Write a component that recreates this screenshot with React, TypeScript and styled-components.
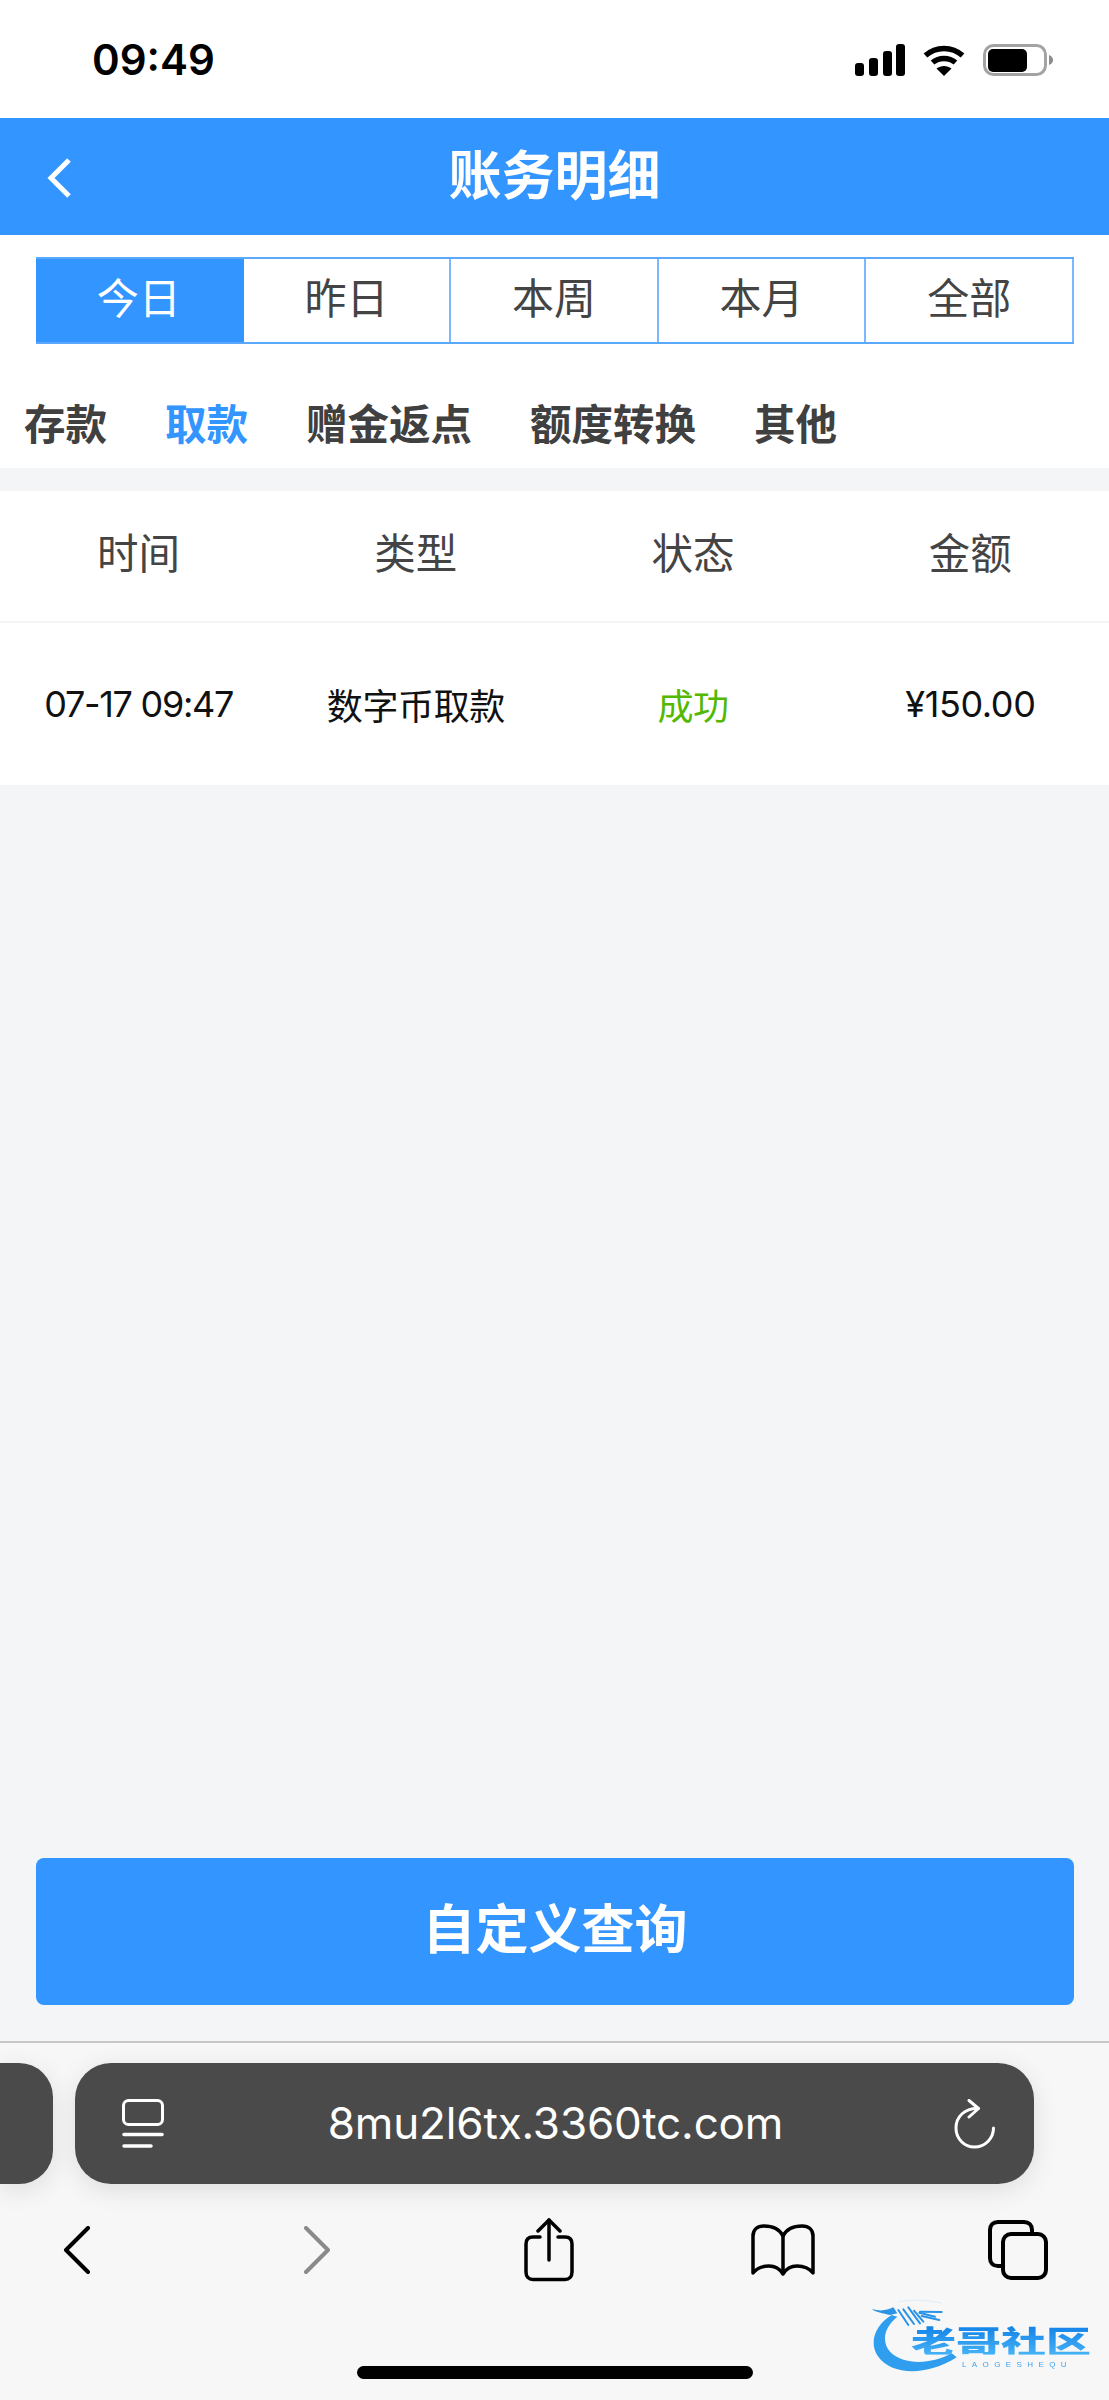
import * as React from 'react';
import styled, { createGlobalStyle } from 'styled-components';

const cjk = `"Noto Sans CJK SC", "Noto Sans", sans-serif`;

const GlobalStyle = createGlobalStyle`
  html, body {
    margin: 0;
    padding: 0;
    background: #f4f5f7;
  }
  * {
    box-sizing: border-box;
  }
`;

const Page = styled.div`
  position: relative;
  width: 1109px;
  height: 2400px;
  display: flex;
  flex-direction: column;
  overflow: hidden;
  background: #f4f5f7;
  font-family: ${cjk};
`;

const StatusBar = styled.div`
  height: 118px;
  flex: none;
  background: #ffffff;
  display: flex;
  align-items: flex-start;
  justify-content: space-between;
  padding: 34px 56px 0 92px;
`;

const Clock = styled.span`
  font-family: Inter, sans-serif;
  font-weight: 600;
  font-size: 42px;
  line-height: 52px;
  color: #000000;
`;

const StatusIcons = styled.div`
  display: flex;
  align-items: center;
  gap: 18px;
  margin-top: 10px;
`;

const Header = styled.header`
  height: 117px;
  flex: none;
  background: #3395ff;
  display: grid;
  grid-template-columns: 100px 1fr 100px;
  align-items: center;
`;

const BackButton = styled.div`
  display: flex;
  padding: 3px 0 0 46px;
`;

const Title = styled.h1`
  margin: 0;
  padding-bottom: 9px;
  text-align: center;
  font-size: 53px;
  line-height: 72px;
  font-weight: 700;
  color: #ffffff;
`;

const Main = styled.div`
  flex: 1;
  display: flex;
  flex-direction: column;
`;

const TopArea = styled.div`
  background: #ffffff;
  padding-top: 22px;
  height: 233px;
  flex: none;
`;

const RangeTabs = styled.div`
  margin: 0 35px 0 36px;
  height: 87px;
  display: grid;
  grid-template-columns: repeat(5, 1fr);
  border-top: 2px solid #5ba9ff;
  border-bottom: 2px solid #5ba9ff;
`;

const RangeTab = styled.div<{ $active?: boolean }>`
  display: flex;
  align-items: center;
  justify-content: center;
  padding-bottom: 10px;
  font-size: 42px;
  color: ${(p) => (p.$active ? '#ffffff' : '#444444')};
  background: ${(p) => (p.$active ? '#3395ff' : '#ffffff')};
  border-right: 2px solid ${(p) => (p.$active ? '#3395ff' : '#7ab9ff')};
`;

const KindTabs = styled.div`
  display: flex;
  gap: 58px;
  padding: 49px 0 0 24px;
`;

const KindTab = styled.span<{ $active?: boolean }>`
  font-size: 41.5px;
  line-height: 58px;
  font-weight: 700;
  color: ${(p) => (p.$active ? '#3395ff' : '#404040')};
`;

const Table = styled.div`
  margin-top: 23px;
  background: #ffffff;
  flex: none;
`;

const TableRow = styled.div<{ $head?: boolean }>`
  display: grid;
  grid-template-columns: repeat(4, 1fr);
  align-items: center;
  height: ${(p) => (p.$head ? '132px' : '162px')};
  border-bottom: ${(p) => (p.$head ? '2px solid #f4f5f7' : 'none')};
`;

const HeadCell = styled.div`
  padding-bottom: 10px;
  text-align: center;
  font-size: 41.5px;
  color: #444444;
`;

const Cell = styled.div<{ $success?: boolean; $tight?: boolean }>`
  text-align: center;
  font-size: 36px;
  font-family: Inter, ${cjk};
  letter-spacing: ${(p) => (p.$tight ? '-1.3px' : '-0.4px')};
  color: ${(p) => (p.$success ? '#52b900' : '#111111')};
`;

const Spacer = styled.div`
  flex: 1;
`;

const QueryButton = styled.div`
  margin: 0 35px 36px 36px;
  height: 147px;
  padding-bottom: 12px;
  border-radius: 8px;
  background: #3395ff;
  color: #ffffff;
  display: flex;
  align-items: center;
  justify-content: center;
  font-size: 53px;
  font-weight: 700;
`;

const BrowserChrome = styled.div`
  height: 359px;
  flex: none;
  background: #f7f7f7;
  border-top: 2px solid #c6c6c6;
`;

const AddressRow = styled.div`
  display: flex;
  gap: 22px;
  height: 121px;
  margin-top: 20px;
`;

const TabStub = styled.div`
  width: 53px;
  flex: none;
  background: #4a4a4a;
  border-radius: 0 34px 34px 0;
  box-shadow: 0 6px 26px rgba(0, 0, 0, 0.1);
`;

const AddressBar = styled.div`
  width: 959px;
  flex: none;
  border-radius: 36px;
  background: #4a4a4a;
  box-shadow: 0 6px 26px rgba(0, 0, 0, 0.1);
  display: grid;
  grid-template-columns: auto 1fr auto;
  align-items: center;
  padding: 0 38px 0 47px;
`;

const AddressText = styled.span`
  padding: 0 7px 2px 0;
  text-align: center;
  font-family: Inter, sans-serif;
  font-size: 44px;
  letter-spacing: -0.15px;
  line-height: 52px;
  color: #ffffff;
`;

const Toolbar = styled.div`
  display: grid;
  grid-template-columns: 154px 326px 138px 330px 140px;
  justify-items: center;
  align-items: center;
  height: 64px;
  margin-top: 34px;
`;

const HomeIndicator = styled.div`
  width: 396px;
  height: 13px;
  border-radius: 7px;
  background: #000000;
  margin: 84px auto 0;
`;

/* site watermark sitting over the bottom toolbar */
const Watermark = styled.div`
  position: absolute;
  left: 840px;
  top: 2270px;
  width: 269px;
  height: 130px;
  filter: blur(0.6px);
`;

const WatermarkName = styled.span`
  position: absolute;
  left: 71px;
  top: 54px;
  width: 184px;
  font-size: 45px;
  line-height: 45px;
  font-weight: 900;
  white-space: nowrap;
  transform: scaleY(0.68);
  transform-origin: left top;
  background: linear-gradient(180deg, #0f7fe6, #46b2f6);
  -webkit-background-clip: text;
  background-clip: text;
  color: transparent;
`;

const WatermarkSub = styled.span`
  position: absolute;
  left: 122px;
  top: 90px;
  font-family: "Liberation Sans", sans-serif;
  font-size: 8px;
  line-height: 9px;
  letter-spacing: 5.4px;
  color: #3ea3ee;
  white-space: nowrap;
`;

const SignalIcon = () => (
  <svg width="50" height="32" viewBox="0 0 50 32">
    <rect x="0" y="19" width="9" height="13" rx="3" fill="#000" />
    <rect x="14" y="14" width="9" height="18" rx="3" fill="#000" />
    <rect x="28" y="7" width="9" height="25" rx="3" fill="#000" />
    <rect x="41" y="0" width="9" height="32" rx="3" fill="#000" />
  </svg>
);

const WifiIcon = () => (
  <svg width="42" height="32" viewBox="0 0 42 32" fill="none">
    <path d="M2.5 11.5C13 2 29 2 39.5 11.5" stroke="#000" strokeWidth="5.5" />
    <path d="M9.5 18.5C16 13 26 13 32.5 18.5" stroke="#000" strokeWidth="5.5" />
    <path d="M21 32L13.5 24.5C18 21 24 21 28.5 24.5Z" fill="#000" />
  </svg>
);

const BatteryIcon = () => (
  <svg width="70" height="32" viewBox="0 0 70 32">
    <rect x="1.5" y="1.5" width="61" height="29" rx="9" fill="none" stroke="#a3a3a3" strokeWidth="3" />
    <rect x="5" y="5" width="39" height="23" rx="5" fill="#000" />
    <path d="M66 11C69 12 70 14 70 16C70 18 69 20 66 21Z" fill="#8d8d8d" />
  </svg>
);

const HeaderBackIcon = () => (
  <svg width="26" height="42" viewBox="0 0 26 42" fill="none">
    <path d="M23 3L5 21L23 39" stroke="#fff" strokeWidth="5" />
  </svg>
);

const ReaderIcon = () => (
  <svg width="42" height="50" viewBox="0 0 42 50" fill="none">
    <rect x="1.5" y="1.5" width="39" height="24" rx="5" stroke="#fff" strokeWidth="3" />
    <path d="M2 35.5H40" stroke="#fff" strokeWidth="3.5" strokeLinecap="round" />
    <path d="M2 47H29" stroke="#fff" strokeWidth="3.5" strokeLinecap="round" />
  </svg>
);

const ReloadIcon = () => (
  <svg width="42" height="50" viewBox="0 0 42 50" fill="none">
    <path d="M24 9.5C11 9 2 17.5 2 29C2 39.5 10 48 20.5 48C31 48 39.5 39.5 39.5 29" stroke="#fff" strokeWidth="3" strokeLinecap="round" />
    <path d="M15 1.5L24.5 9.5L15 18" stroke="#fff" strokeWidth="3" strokeLinecap="round" strokeLinejoin="round" />
  </svg>
);

const ChevronIcon = ({ color, flip }: { color: string; flip?: boolean }) => (
  <svg width="28" height="48" viewBox="0 0 28 48" fill="none" style={flip ? { transform: 'scaleX(-1)' } : undefined}>
    <path d="M25 2L3 24L25 46" stroke={color} strokeWidth="4" strokeLinecap="round" strokeLinejoin="round" />
  </svg>
);

const ShareIcon = () => (
  <svg width="50" height="64" viewBox="0 0 50 64" fill="none" stroke="#000" strokeWidth="3.5" strokeLinecap="round" strokeLinejoin="round">
    <path d="M16 19H9C4.5 19 2 21.5 2 26V54C2 58.5 4.5 61.5 9 61.5H41C45.5 61.5 48 58.5 48 54V26C48 21.5 45.5 19 41 19H34" />
    <path d="M25 42V2" />
    <path d="M14 13L25 2L36 13" />
  </svg>
);

const BookIcon = () => (
  <svg width="64" height="52" viewBox="0 0 64 52" fill="none" stroke="#000" strokeWidth="3.5" strokeLinejoin="round" strokeLinecap="round">
    <path d="M32 12C28 4 20 2 13 2C6 2 2 6 2 12V49C6 44 12 42 18 42C25 42 29 45 32 50C35 45 39 42 46 42C52 42 58 44 62 49V12C62 6 58 2 51 2C44 2 36 4 32 12Z" />
    <path d="M32 12V48" />
  </svg>
);

const TabsIcon = () => (
  <svg width="60" height="60" viewBox="0 0 60 60" fill="none" stroke="#000" strokeWidth="4">
    <path d="M15 46H10C5 46 2 43 2 38V10C2 5 5 2 10 2H36C41 2 44 5 44 10V14" />
    <rect x="15" y="14" width="43" height="44" rx="8" />
  </svg>
);

/* the dragon coiled round the site name */
const DragonMark = () => (
  <svg width="269" height="130" viewBox="0 0 807 390" style={{ position: 'absolute', left: 0, top: 0 }}>
    <path
      d="M155 135C105 165 85 220 115 260C150 310 250 325 350 262L335 250C270 285 190 285 150 245C125 215 130 175 172 140Z"
      fill="#2f9eef"
    />
    <path d="M95 117C120 124 140 122 160 112L172 130L150 135C130 130 105 126 95 117Z" fill="#2a93e6" />
    <g stroke="#2a93e6" strokeWidth="6" strokeLinecap="round">
      <path d="M175 120L205 165" />
      <path d="M190 118L222 162" />
      <path d="M205 112L240 160" />
      <path d="M222 122L250 155" />
      <path d="M238 128L285 140" />
      <path d="M245 138L298 150" />
      <path d="M240 125L305 126" />
    </g>
    <path d="M175 95C220 88 270 90 305 100" fill="none" stroke="#dcecf8" strokeWidth="3" />
  </svg>
);

const ranges = ['今日', '昨日', '本周', '本月', '全部'];
const kinds = ['存款', '取款', '赠金返点', '额度转换', '其他'];
const columns = ['时间', '类型', '状态', '金额'];

export default function App() {
  return (
    <Page>
      <GlobalStyle />
      <StatusBar>
        <Clock>09:49</Clock>
        <StatusIcons>
          <SignalIcon />
          <WifiIcon />
          <BatteryIcon />
        </StatusIcons>
      </StatusBar>

      <Header>
        <BackButton>
          <HeaderBackIcon />
        </BackButton>
        <Title>账务明细</Title>
      </Header>

      <Main>
        <TopArea>
          <RangeTabs>
            {ranges.map((r, i) => (
              <RangeTab key={r} $active={i === 0}>
                {r}
              </RangeTab>
            ))}
          </RangeTabs>
          <KindTabs>
            {kinds.map((k, i) => (
              <KindTab key={k} $active={i === 1}>
                {k}
              </KindTab>
            ))}
          </KindTabs>
        </TopArea>

        <Table>
          <TableRow $head>
            {columns.map((c) => (
              <HeadCell key={c}>{c}</HeadCell>
            ))}
          </TableRow>
          <TableRow>
            <Cell $tight>07-17 09:47</Cell>
            <Cell>数字币取款</Cell>
            <Cell $success>成功</Cell>
            <Cell>¥150.00</Cell>
          </TableRow>
        </Table>

        <Spacer />
        <QueryButton>自定义查询</QueryButton>
      </Main>

      <BrowserChrome>
        <AddressRow>
          <TabStub />
          <AddressBar>
            <ReaderIcon />
            <AddressText>8mu2l6tx.3360tc.com</AddressText>
            <ReloadIcon />
          </AddressBar>
        </AddressRow>
        <Toolbar>
          <ChevronIcon color="#000000" />
          <ChevronIcon color="#8a8a8a" flip />
          <ShareIcon />
          <BookIcon />
          <TabsIcon />
        </Toolbar>
        <HomeIndicator />
      </BrowserChrome>

      <Watermark>
        <DragonMark />
        <WatermarkName>老哥社区</WatermarkName>
        <WatermarkSub>LAOGESHEQU</WatermarkSub>
      </Watermark>
    </Page>
  );
}
